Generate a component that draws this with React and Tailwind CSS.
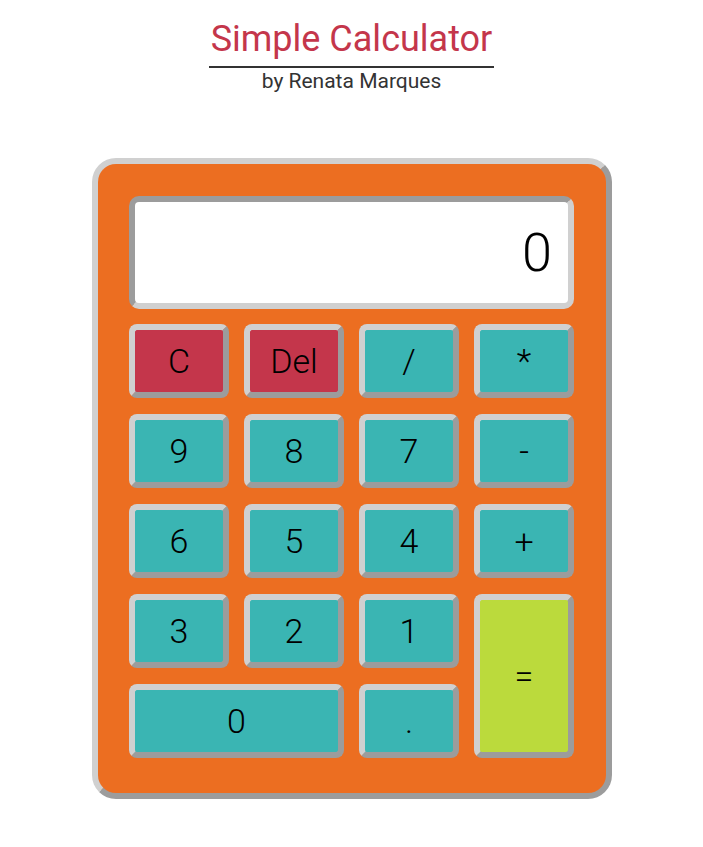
import React, { useState } from 'react';

const keys = [
    { label: 'C', color: 'bg-[#c4364b]' },
    { label: 'Del', color: 'bg-[#c4364b]' },
    { label: '/', color: 'bg-[#3ab5b3]' },
    { label: '*', color: 'bg-[#3ab5b3]' },
    { label: '9', color: 'bg-[#3ab5b3]' },
    { label: '8', color: 'bg-[#3ab5b3]' },
    { label: '7', color: 'bg-[#3ab5b3]' },
    { label: '-', color: 'bg-[#3ab5b3]' },
    { label: '6', color: 'bg-[#3ab5b3]' },
    { label: '5', color: 'bg-[#3ab5b3]' },
    { label: '4', color: 'bg-[#3ab5b3]' },
    { label: '+', color: 'bg-[#3ab5b3]' },
    { label: '3', color: 'bg-[#3ab5b3]' },
    { label: '2', color: 'bg-[#3ab5b3]' },
    { label: '1', color: 'bg-[#3ab5b3]' },
    { label: '=', color: 'bg-[#bbda3c] row-span-2' },
    { label: '0', color: 'bg-[#3ab5b3] col-span-2' },
    { label: '.', color: 'bg-[#3ab5b3]' },
];

const App = () => {
    const [display] = useState('0');

    return (
        <div className="min-h-screen bg-white flex flex-col items-center pt-[16px] font-['Roboto',sans-serif]">
            <h1 className="inline-block border-b-2 border-[#333] px-[2px] pb-[4px] text-[36px] leading-[46px] text-[#c4364b] font-normal">
                Simple Calculator
            </h1>
            <p className="text-[21px] leading-[26px] text-[#333]">by Renata Marques</p>

            <div className="mt-[64px] w-[520px] rounded-[24px] border-[6px] border-t-[#d0d0d0] border-l-[#d0d0d0] border-r-[#9c9c9c] border-b-[#9c9c9c] bg-[#ec6e21] pt-[32px] pb-[35px]">
                <div className="w-[445px] mx-auto">
                    {/* screen */}
                    <div className="h-[113px] rounded-[10px] border-[6px] border-t-[#9c9c9c] border-l-[#9c9c9c] border-r-[#d0d0d0] border-b-[#d0d0d0] bg-white flex items-center justify-end pr-[16px] text-[54px] font-light text-black">
                        {display}
                    </div>

                    {/* keys */}
                    <div className="mt-[15px] grid grid-cols-[repeat(4,100px)] auto-rows-[74px] gap-x-[15px] gap-y-[16px]">
                        {keys.map(k => (
                            <button
                                key={k.label}
                                className={`${k.color} rounded-[8px] border-[6px] border-t-[#d0d0d0] border-l-[#d0d0d0] border-r-[#9c9c9c] border-b-[#9c9c9c] flex items-center justify-center text-[34px] font-light text-black`}
                            >
                                {k.label}
                            </button>
                        ))}
                    </div>
                </div>
            </div>
        </div>
    );
};

export default App;
